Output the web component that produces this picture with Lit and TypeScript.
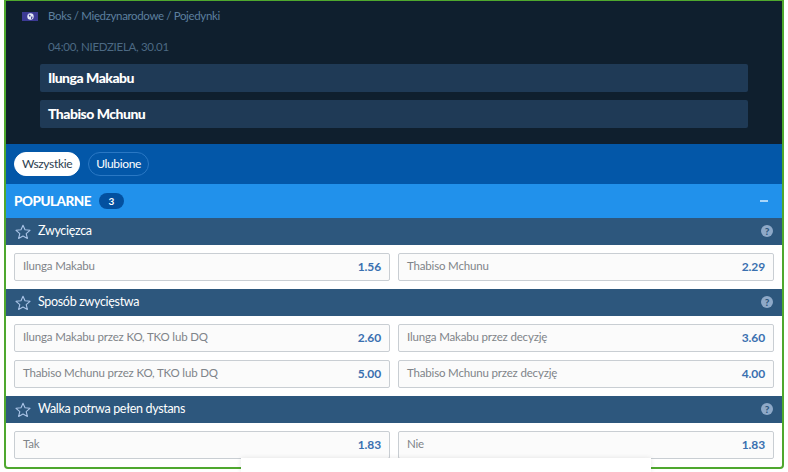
import { LitElement, html, css, svg } from "lit";
import { customElement } from "lit/decorators.js";

type Odd = [string, string];
const sections: { title: string; rows: Odd[][] }[] = [
  { title: "Zwycięzca", rows: [[["Ilunga Makabu", "1.56"], ["Thabiso Mchunu", "2.29"]]] },
  {
    title: "Sposób zwycięstwa",
    rows: [
      [["Ilunga Makabu przez KO, TKO lub DQ", "2.60"], ["Ilunga Makabu przez decyzję", "3.60"]],
      [["Thabiso Mchunu przez KO, TKO lub DQ", "5.00"], ["Thabiso Mchunu przez decyzję", "4.00"]],
    ],
  },
  { title: "Walka potrwa pełen dystans", rows: [[["Tak", "1.83"], ["Nie", "1.83"]]] },
];

const star = svg`<svg class="star" width="16" height="16" viewBox="0 0 16 16"><path d="M8 1.2l2 4.6 5 .5-3.8 3.3 1.2 4.9L8 12l-4.4 2.5 1.2-4.9L1 6.3l5-.5z" fill="none" stroke="#a9c3e6" stroke-width="1.1" stroke-linejoin="round"/></svg>`;
const globe = svg`<svg width="7" height="7" viewBox="0 0 7 7"><circle cx="3.5" cy="3.5" r="3.2" fill="#e4e9f6"/><path d="M1.6 1.6l1.8.3.2 1.4-1.2.4zM4.2 3.6l1.5.2-.7 1.9-1 .2z" fill="#3c3a94"/></svg>`;

@customElement("app-root")
export class AppRoot extends LitElement {
  static styles = css`
    :host { display: block; width: 788px; height: 472px; overflow: hidden; position: relative; background: #fff; font-family: "Lato", "Liberation Sans", sans-serif; }
    .frame { margin: 0 4px; height: 469px; box-sizing: border-box; border: 2px solid #4fa82e; border-top-width: 1px; border-radius: 0 0 4px 4px; overflow: hidden; background: #fff; }
    .event { height: 143px; box-sizing: border-box; background: #0f1f2e; padding: 8px 34px 0; }
    .crumb { display: flex; align-items: center; color: #5d7f9f; font-size: 11.5px; letter-spacing: -0.36px; line-height: 14px; margin-left: -18px; }
    .flag { width: 16px; height: 9px; background: #3c3a94; display: flex; align-items: center; justify-content: center; margin-right: 10px; }
    .date { color: #4c6983; font-size: 11.5px; letter-spacing: -0.3px; line-height: 14px; margin: 17px 0 0 8px; }
    .team { height: 28px; background: #1f3a56; border-radius: 2px; color: #fff; font-weight: 900; font-size: 14px; letter-spacing: -0.5px; line-height: 28px; padding-left: 8px; width: 708px; box-sizing: border-box; }
    .t1 { margin-top: 10px; }
    .t2 { margin-top: 8px; }
    .tabs { height: 40px; background: #0357a8; display: flex; align-items: center; gap: 8px; padding-left: 8px; box-sizing: border-box; }
    .tab { height: 24px; line-height: 22px; box-sizing: border-box; border-radius: 12px; font-size: 12px; letter-spacing: -0.35px; padding: 0 7px; border: 1px solid #2a78c4; color: #fff; }
    .tab.on { background: #fff; color: #2c3e50; border-color: #fff; }
    .pop { height: 34px; background: #2191eb; display: flex; align-items: center; padding: 0 14px 0 8px; color: #fff; }
    .pop b { font-size: 13.5px; font-weight: 900; letter-spacing: -0.5px; }
    .badge { margin-left: 8px; width: 25px; height: 16px; border-radius: 8px; background: #03509f; font-size: 10px; font-weight: 700; text-align: center; line-height: 16px; }
    .dash { margin-left: auto; width: 8px; height: 2px; background: #a8d6fa; }
    .head { height: 27px; background: #2d577d; display: flex; align-items: center; padding: 0 9px; color: #fff; font-size: 12.5px; letter-spacing: -0.32px; }
    .head span { position: relative; top: -1px; }
    .star { margin-right: 7px; flex: none; }
    .q { margin-left: auto; position: relative; top: -1px; width: 12px; height: 12px; border-radius: 50%; background: #8ea9c8; color: #2d577d; font-size: 10px; font-weight: 900; line-height: 12px; text-align: center; letter-spacing: 0; }
    .body { padding: 8px; display: flex; flex-direction: column; gap: 8px; }
    .row { display: grid; grid-template-columns: 1fr 1fr; gap: 8px; }
    .odd { height: 28px; box-sizing: border-box; border: 1px solid #c9ced3; border-radius: 2px; background: #fbfbfb; display: flex; justify-content: space-between; align-items: center; padding: 0 8px; font-size: 11.5px; letter-spacing: -0.17px; color: #7f8489; }
    .odd span { position: relative; top: -2px; }
    .odd b { position: relative; top: -1px; color: #3a70b0; font-weight: 700; font-size: 12px; letter-spacing: -0.1px; }
    .cover { position: absolute; left: 241px; top: 458px; width: 410px; height: 14px; background: #fff; box-shadow: 0 0 5px rgba(0,0,0,.1); }
  `;
  render() {
    return html`
      <div class="frame">
        <div class="event">
          <div class="crumb"><span class="flag">${globe}</span>Boks / Międzynarodowe / Pojedynki</div>
          <div class="date">04:00, NIEDZIELA, 30.01</div>
          <div class="team t1">Ilunga Makabu</div>
          <div class="team t2">Thabiso Mchunu</div>
        </div>
        <div class="tabs"><div class="tab on">Wszystkie</div><div class="tab">Ulubione</div></div>
        <div class="pop"><b>POPULARNE</b><div class="badge">3</div><div class="dash"></div></div>
        ${sections.map(
          (s) => html`
            <div class="head">${star}<span>${s.title}</span><div class="q">?</div></div>
            <div class="body">
              ${s.rows.map(
                (r) => html`<div class="row">${r.map(
                  ([n, v]) => html`<div class="odd"><span>${n}</span><b>${v}</b></div>`
                )}</div>`
              )}
            </div>`
        )}
      </div>
      <div class="cover"></div>
    `;
  }
}
